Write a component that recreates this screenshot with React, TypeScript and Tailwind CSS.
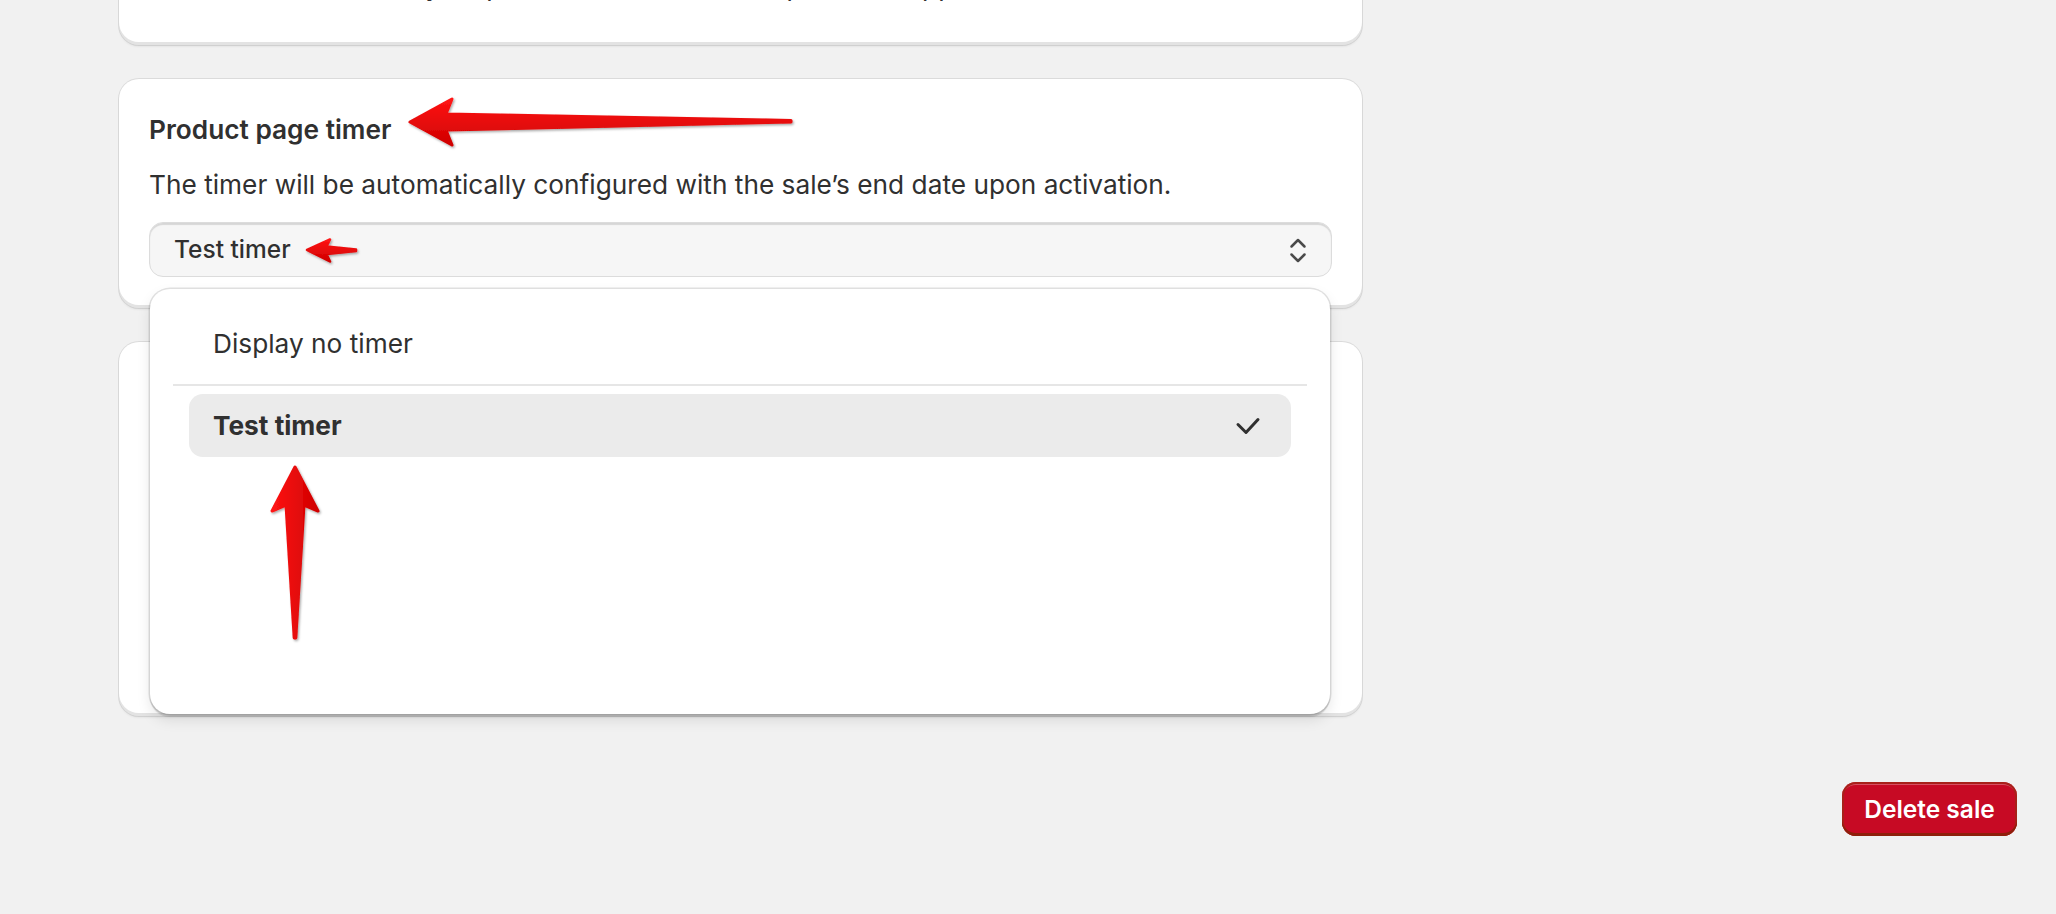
import React from "react";

const card =
  "rounded-[20px] bg-white shadow-[0_0_0_1px_rgba(0,0,0,0.09),inset_0_-3px_0_0_rgba(0,0,0,0.11),0_2px_2px_rgba(0,0,0,0.05)]";

function Arrows() {
  return (
    <svg
      className="pointer-events-none absolute left-0 top-0 z-20"
      width={2056}
      height={914}
      viewBox="0 0 2056 914"
    >
      <defs>
        <linearGradient id="gv" x1="0" y1="0" x2="0" y2="1">
          <stop offset="0" stopColor="#ff1414" />
          <stop offset="1" stopColor="#cf0000" />
        </linearGradient>
        <linearGradient id="gh" x1="0" y1="0" x2="1" y2="0">
          <stop offset="0" stopColor="#ff1414" />
          <stop offset="1" stopColor="#cf0000" />
        </linearGradient>
        <filter id="sh" x="-20%" y="-20%" width="140%" height="140%">
          <feDropShadow dx="1.2" dy="1.5" stdDeviation="1" floodColor="#000" floodOpacity="0.35" />
        </filter>
      </defs>
      <polygon
        points="410,122 452,99 446,114 791,120.5 791,122 446,130 452,145"
        fill="url(#gv)"
        stroke="url(#gv)"
        strokeWidth={3}
        strokeLinejoin="round"
        filter="url(#sh)"
      />
      <polygon
        points="307,250 330,239.5 326.5,246.5 356,249.5 356,251 326.5,254 330,261.5"
        fill="url(#gv)"
        stroke="url(#gv)"
        strokeWidth={2.5}
        strokeLinejoin="round"
        filter="url(#sh)"
      />
      <polygon
        points="295,467 318,511 304,505 295.8,638 294.2,638 286,505 272,511"
        fill="url(#gh)"
        stroke="url(#gh)"
        strokeWidth={3}
        strokeLinejoin="round"
        filter="url(#sh)"
      />
    </svg>
  );
}

export default function App() {
  return (
    <div className="relative h-[914px] w-[2056px] overflow-hidden bg-[#f1f1f1] font-['Inter',sans-serif] text-[#303030]">
      <div className="flex flex-col pl-[119px]">
        <div className="flex w-[1243px] flex-col gap-[34px]">
          {/* top card (mostly scrolled out of view) */}
          <div className={`${card} -mt-[66px] px-[30px] pb-[41px] pt-[35px]`}>
            <div className="flex h-[35px] items-center gap-[14px] text-[26.25px] leading-[35px]">
              <svg width="22" height="22" viewBox="0 0 22 22" className="ml-[9px] shrink-0">
                <circle cx="11" cy="13" r="9" fill="#303030" />
              </svg>
              <span>Show the timer only on products in this sale (requires the app embed).</span>
            </div>
          </div>

          {/* product page timer card */}
          <div className={`${card} relative z-10 px-[30px] pb-[31px] pt-[33px]`}>
            <h2 className="text-[26.25px] font-semibold leading-[35px]">Product page timer</h2>
            <p className="mt-[20px] text-[26.25px] leading-[35px]">
              The timer will be automatically configured with the sale’s end date upon activation.
            </p>
            <div className="relative mt-[20px]">
              <div className="flex h-[55px] items-center justify-between rounded-[14px] border border-[#dcdcdc] bg-[#f6f6f6] pl-[24px] pr-[22px] shadow-[inset_0_2px_1px_rgba(0,0,0,0.13)]">
                <span className="text-[24.5px] font-medium leading-[35px]">Test timer</span>
                <svg width="20" height="28" viewBox="0 0 20 28">
                  <polyline
                    points="2.5,10.5 9,4 15.5,10.5"
                    fill="none"
                    stroke="#4a4a4a"
                    strokeWidth={2.5}
                    strokeLinecap="round"
                    strokeLinejoin="round"
                  />
                  <polyline
                    points="2.5,18.5 9,25 15.5,18.5"
                    fill="none"
                    stroke="#4a4a4a"
                    strokeWidth={2.5}
                    strokeLinecap="round"
                    strokeLinejoin="round"
                  />
                </svg>
              </div>

              {/* popover */}
              <div className="absolute left-[1px] right-[2px] top-[67px] h-[425px] rounded-[20px] bg-white px-[23px] pt-[23px] shadow-[0_0_0_1.5px_rgba(0,0,0,0.11),0_3px_1px_rgba(0,0,0,0.12),0_6px_14px_rgba(0,0,0,0.1)]">
                <div className="px-[16px]">
                  <div className="flex h-[63px] items-center rounded-[14px] pl-[24px] pr-[30px] text-[26.25px] leading-[35px]">
                    Display no timer
                  </div>
                </div>
                <div className="mt-[9px] h-[2px] bg-[#e6e6e6]" />
                <div className="mt-[8px] px-[16px]">
                  <div className="flex h-[63px] items-center justify-between rounded-[14px] bg-[#ebebeb] pl-[24px] pr-[30px] text-[26.25px] font-bold leading-[35px]">
                    <span>Test timer</span>
                    <svg width="26" height="24" viewBox="0 0 26 24">
                      <polyline
                        points="3,10.5 11,18.5 23,5.5"
                        fill="none"
                        stroke="#303030"
                        strokeWidth={3}
                        strokeLinecap="round"
                        strokeLinejoin="round"
                      />
                    </svg>
                  </div>
                </div>
              </div>
            </div>
          </div>

          {/* card behind the popover */}
          <div className={`${card} h-[374px]`} />
        </div>

        <div className="mt-[66px] flex justify-end pr-[39px]">
          <button className="h-[54px] w-[175px] rounded-[14px] bg-[#c70a24] text-[24.5px] font-semibold text-white shadow-[inset_0_-3px_0_0_#8e1f0b,inset_0_0_0_2px_#a8201a,inset_0_3px_0_0_rgba(255,255,255,0.28)]">
            Delete sale
          </button>
        </div>
      </div>

      <Arrows />
    </div>
  );
}
